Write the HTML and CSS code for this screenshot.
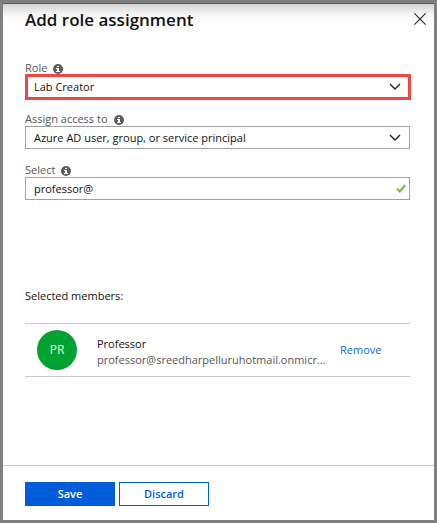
FILE: index.html
```html
<!DOCTYPE html>
<html lang="en">
<head>
<meta charset="utf-8">
<meta name="viewport" content="width=device-width, initial-scale=1">
<title>Add role assignment</title>
<link rel="stylesheet" href="styles.css">
</head>
<body>
<svg class="sprite" aria-hidden="true">
  <symbol id="info" viewBox="0 0 10 10">
    <circle cx="5" cy="5" r="5" fill="#5c5c5c"/>
    <path d="M4 2h2v1H4zM4 4h2v3h1v1H3V7h1V5H3V4z" fill="#fff"/>
  </symbol>
  <symbol id="chevron" viewBox="0 0 12 8">
    <path d="M1 1l5 5 5-5" fill="none" stroke="#222" stroke-width="1.4"/>
  </symbol>
</svg>
<form class="panel">
  <header class="header">
    <h1 class="title">Add role assignment</h1>
    <button class="close" type="button" aria-label="Close">
      <svg width="12" height="12" viewBox="0 0 12 12"><path d="M.4.4l11.2 11.2M11.6.4L.4 11.6" stroke="#222" stroke-width="1.1"/></svg>
    </button>
  </header>
  <main class="content">
    <div class="field">
      <div class="label"><label for="role">Role</label><svg class="info"><use href="#info"/></svg></div>
      <div class="control control-highlight">
        <select id="role"><option>Lab Creator</option></select>
        <svg class="chevron"><use href="#chevron"/></svg>
      </div>
    </div>
    <div class="field">
      <div class="label"><label for="access">Assign access to</label><svg class="info"><use href="#info"/></svg></div>
      <div class="control">
        <select id="access"><option>Azure AD user, group, or service principal</option></select>
        <svg class="chevron"><use href="#chevron"/></svg>
      </div>
    </div>
    <div class="field">
      <div class="label"><label for="member">Select</label><svg class="info"><use href="#info"/></svg></div>
      <div class="control">
        <input id="member" type="text" value="professor@" spellcheck="false">
        <svg class="check" viewBox="0 0 10 9"><path d="M.8 4.6l3 2.9L9.2 1" fill="none" stroke="#7dba33" stroke-width="2"/></svg>
      </div>
    </div>
    <section class="members">
      <h2 class="members-title">Selected members:</h2>
      <div class="member">
        <span class="avatar">PR</span>
        <div class="identity">
          <div>Professor</div>
          <div class="email">professor@sreedharpelluruhotmail.onmicr...</div>
        </div>
        <a class="remove" href="#">Remove</a>
      </div>
    </section>
  </main>
  <footer class="footer">
    <button class="button button-primary" type="button">Save</button>
    <button class="button" type="button">Discard</button>
  </footer>
</form>
</body>
</html>
```
FILE: styles.css
```css
* { box-sizing: border-box; }

body {
  margin: 0;
  padding: 3px;
  min-height: 100vh;
  display: flex;
  background: #808080;
  color: #111;
  font: 11px/16px "Open Sans", sans-serif;
}

.sprite { position: absolute; width: 0; height: 0; }

.panel {
  flex: 1;
  min-width: 0;
  display: flex;
  flex-direction: column;
  border-top: 1px solid #0072c6;
  background: linear-gradient(#d2d2d2, #f4f4f4 10px, #fff 18px);
}

.header {
  display: flex;
  justify-content: space-between;
  align-items: flex-start;
  height: 57px;
  padding: 3px 8px 0 22px;
}

.title {
  margin: 0;
  font-size: 17px;
  line-height: 26px;
  font-weight: 600;
}

.close {
  display: flex;
  margin-top: 6px;
  padding: 0;
  border: 0;
  background: none;
}

.content { flex: 1; padding: 0 24px 0 22px; }
.field { margin-bottom: 14px; }

.label {
  display: flex;
  align-items: center;
  gap: 6px;
  height: 14px;
  color: #555;
}

.info { width: 10px; height: 10px; margin-top: 2px; }

.control {
  display: flex;
  align-items: center;
  height: 23px;
  padding-left: 8px;
  border: 1px solid #a0a0a0;
  background: #fff;
}

.control-highlight {
  height: 26px;
  margin: -1px -1px -2px 0;
  padding-left: 6px;
  border: 3px solid #ee4845;
}

.control select,
.control input {
  appearance: none;
  flex: 1;
  min-width: 0;
  height: 20px;
  padding: 0;
  border: 0;
  outline: 0;
  background: none;
  color: #111;
  font: inherit;
}

.chevron { width: 12px; height: 8px; margin-right: 8px; pointer-events: none; }
.control-highlight .chevron { margin-right: 7px; }
.check { width: 10px; height: 9px; margin-right: 3px; }

.members { padding-top: 74px; }

.members-title {
  margin: 0 0 19px;
  font-size: 11px;
  font-weight: 400;
}

.member {
  display: flex;
  align-items: center;
  height: 54px;
  padding-left: 12px;
  border: solid #c8c8c8;
  border-width: 1px 0;
}

.avatar {
  display: grid;
  place-items: center;
  width: 40px;
  height: 40px;
  border-radius: 50%;
  background: #00a331;
  color: #e3f5e7;
  font-size: 12px;
}

.identity {
  width: 233px;
  margin: 4px 10px 0 20px;
  white-space: nowrap;
}

.email { color: #555; }
.remove { color: #0f67d8; text-decoration: none; }

.footer {
  display: flex;
  gap: 4px;
  height: 55px;
  padding: 16px 22px;
  border-top: 1px solid #c8c8c8;
}

.button {
  width: 90px;
  height: 24px;
  padding: 0;
  border: 1px solid #015cda;
  background: #fff;
  color: #015cda;
  font: 600 11px/16px "Open Sans", sans-serif;
}

.button-primary { background: #015cda; color: #fff; }
```
